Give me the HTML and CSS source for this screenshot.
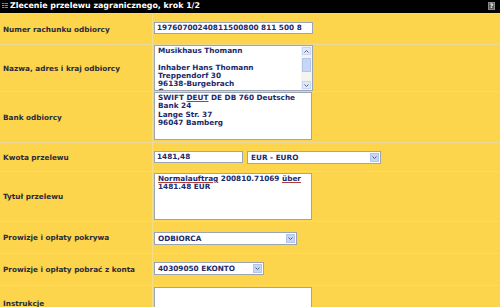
FILE: index.html
```html
<!DOCTYPE html>
<html lang="pl">

<head>
    <meta charset="UTF-8">
    <meta name="viewport" content="width=device-width, initial-scale=1.0">
    <title>Zlecenie przelewu zagranicznego</title>
    <link rel="stylesheet" href="styles.css">
</head>

<body>
    <div class="header">
        <svg class="menu-icon" width="6" height="6" viewBox="0 0 6 6">
            <rect x="0" y="0" width="6" height="1" fill="#c9782a" />
            <rect x="0" y="2" width="6" height="1" fill="#c9782a" />
            <rect x="0" y="4" width="6" height="1" fill="#c9782a" />
            <rect x="2" y="0" width="1" height="6" fill="#000" opacity="0.5" />
        </svg>
        <span class="title">Zlecenie przelewu zagranicznego, krok 1/2</span>
        <span class="help">?</span>
    </div>

    <div class="form">
        <div class="row">
            <div class="label">Numer rachunku odbiorcy</div>
            <div class="value pad-a">
                <div class="field w-full">19760700240811500800 811 500 8</div>
            </div>
        </div>

        <div class="row">
            <div class="label">Nazwa, adres i kraj odbiorcy</div>
            <div class="value">
                <div class="area area-scroll h46">
                    <div class="area-text">Musikhaus Thomann<br><br>Inhaber Hans Thomann<br>Treppendorf 30<br>96138-Burgebrach<br>Germany</div>
                    <div class="scrollbar">
                        <span class="sb-btn">
                            <svg width="5" height="3" viewBox="0 0 5 3"><path d="M0.5 2.5 L2.5 0.5 L4.5 2.5" stroke="#4d6185" fill="none" /></svg>
                        </span>
                        <span class="sb-thumb"></span>
                        <span class="sb-btn sb-down">
                            <svg width="5" height="3" viewBox="0 0 5 3"><path d="M0.5 0.5 L2.5 2.5 L4.5 0.5" stroke="#4d6185" fill="none" /></svg>
                        </span>
                    </div>
                </div>
            </div>
        </div>

        <div class="row">
            <div class="label">Bank odbiorcy</div>
            <div class="value pad-b">
                <div class="area h48">
                    <div class="area-text">SWIFT <span class="typo">DEUT</span> DE DB 760 Deutsche<br>Bank 24<br>Lange Str. 37<br>96047 Bamberg</div>
                </div>
            </div>
        </div>

        <div class="row">
            <div class="label">Kwota przelewu</div>
            <div class="value pad-c inline">
                <div class="field w-amount">1481,48</div>
                <div class="select w-currency">
                    <span>EUR - EURO</span>
                    <span class="drop"><svg width="5" height="3" viewBox="0 0 5 3"><path d="M0.5 0.5 L2.5 2.5 L4.5 0.5" stroke="#4d6185" fill="none" /></svg></span>
                </div>
            </div>
        </div>

        <div class="row">
            <div class="label">Tytuł przelewu</div>
            <div class="value pad-d">
                <div class="area h47">
                    <div class="area-text"><span class="typo">Normalauftrag</span> 200810.71069 <span class="typo">über</span><br>1481.48 EUR</div>
                </div>
            </div>
        </div>

        <div class="row">
            <div class="label">Prowizje i opłaty pokrywa</div>
            <div class="value pad-e">
                <div class="select w-payer">
                    <span>ODBIORCA</span>
                    <span class="drop"><svg width="5" height="3" viewBox="0 0 5 3"><path d="M0.5 0.5 L2.5 2.5 L4.5 0.5" stroke="#4d6185" fill="none" /></svg></span>
                </div>
            </div>
        </div>

        <div class="row">
            <div class="label">Prowizje i opłaty pobrać z konta</div>
            <div class="value pad-f">
                <div class="select w-account">
                    <span>40309050 EKONTO</span>
                    <span class="drop"><svg width="5" height="3" viewBox="0 0 5 3"><path d="M0.5 0.5 L2.5 2.5 L4.5 0.5" stroke="#4d6185" fill="none" /></svg></span>
                </div>
            </div>
        </div>

        <div class="row">
            <div class="label">Instrukcje</div>
            <div class="value pad-g">
                <div class="area h34"></div>
            </div>
        </div>
    </div>
</body>

</html>
```

FILE: styles.css
```css
* {
    padding: 0;
    margin: 0;
    box-sizing: border-box;
}

body {
    background-color: #fcd54c;
    font-family: "DejaVu Sans", Verdana, sans-serif;
    font-weight: bold;
    overflow: hidden;
}

.header {
    height: 13px;
    background-color: #000;
    display: flex;
    align-items: center;
    padding: 0 5px 1px 2px;
}

.menu-icon {
    flex-shrink: 0;
}

.title {
    color: #fff;
    font-size: 7.9px;
    margin-left: 2px;
    line-height: 10px;
}

.help {
    margin-left: auto;
    width: 7px;
    height: 8px;
    background-color: #5a5a5a;
    border: 1px solid #8a8a8a;
    color: #fff;
    font-size: 6px;
    line-height: 6px;
    text-align: center;
}

.row {
    display: grid;
    grid-template-columns: 153px 1fr;
    border-top: 1px solid #ead89c;
}

.label {
    display: flex;
    align-items: center;
    padding-left: 3px;
    font-size: 7.3px;
    color: #2a2a3a;
    border-right: 1px solid #f3de8a;
}

.value {
    padding-left: 1px;
}

.inline {
    display: flex;
    gap: 4px;
}

.pad-a {
    padding-top: 8px;
    padding-bottom: 10px;
}

.pad-b {
    padding-bottom: 2px;
}

.pad-c {
    padding-top: 8px;
    padding-bottom: 7px;
}

.pad-d {
    padding-top: 1px;
    padding-bottom: 1px;
}

.pad-e {
    padding-top: 10px;
    padding-bottom: 8px;
}

.pad-f {
    padding-top: 8px;
    padding-bottom: 10px;
}

.pad-g {
    padding-top: 1px;
}

.field,
.select,
.area {
    background-color: #fff;
    border: 1px solid #9ba6b2;
    color: #1c2a6b;
    font-size: 7.3px;
}

.field {
    height: 12px;
    line-height: 10px;
    padding-left: 2px;
}

.w-full {
    width: 159px;
}

.w-amount {
    width: 89px;
}

.select {
    height: 13px;
    line-height: 11px;
    padding-left: 3px;
    display: flex;
    justify-content: space-between;
}

.drop {
    width: 9px;
    height: 9px;
    margin: 1px;
    background-color: #c6d6f8;
    border: 1px solid #b4c4ea;
    display: flex;
    align-items: center;
    justify-content: center;
}

.w-currency {
    width: 134px;
}

.w-payer {
    width: 143px;
}

.w-account {
    width: 110px;
}

.area {
    width: 158px;
    display: flex;
    overflow: hidden;
}

.area-scroll {
    width: 159px;
}

.area-text {
    flex: 1;
    padding: 1px 0 0 3px;
    line-height: 8.3px;
    white-space: nowrap;
    overflow: hidden;
}

.h34 {
    height: 34px;
}

.h46 {
    height: 46px;
}

.h47 {
    height: 47px;
}

.h48 {
    height: 48px;
}

.typo {
    text-decoration: underline solid #b03a3a;
    text-decoration-thickness: 1px;
    text-underline-offset: 0.5px;
}

.scrollbar {
    width: 11px;
    background-color: #f4f4f0;
    display: flex;
    flex-direction: column;
    padding: 1px 1px;
    gap: 3px;
}

.sb-btn {
    height: 8px;
    background-color: #e0e8fb;
    border: 1px solid #c8d4f2;
    display: flex;
    align-items: center;
    justify-content: center;
}

.sb-thumb {
    height: 14px;
    background-color: #c6d6f8;
    border: 1px solid #b4c4ea;
}

.sb-down {
    margin-top: auto;
}
```
